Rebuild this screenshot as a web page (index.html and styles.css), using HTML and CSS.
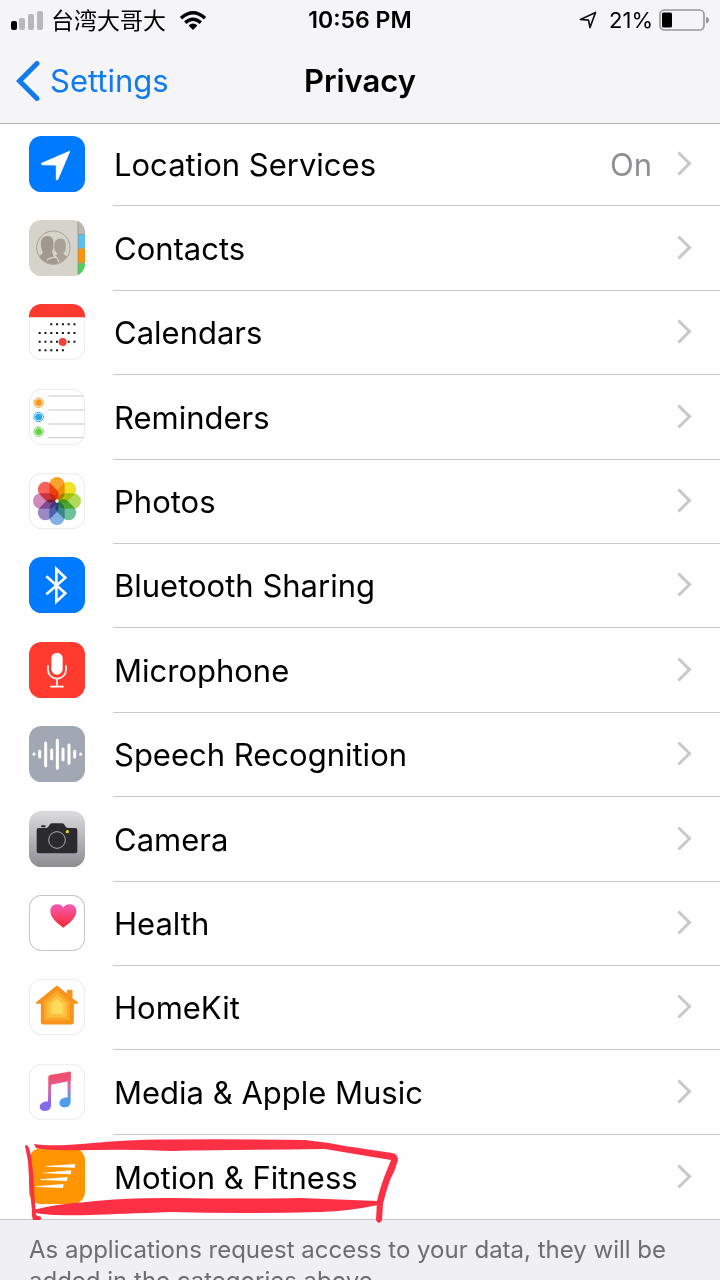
FILE: index.html
```html
<!DOCTYPE html>
<html lang="en">
<head>
<meta charset="utf-8">
<meta name="viewport" content="width=device-width, initial-scale=1">
<title>Privacy</title>
<link rel="stylesheet" href="styles.css">
</head>
<body>
<div class="screen">
  <header class="header">
    <div class="status">
      <div class="status-left">
        <svg class="signal" viewBox="0 0 32 20" aria-hidden="true"><rect x="0" y="11" width="6" height="9" rx="2"/><g fill="#b8b8bb"><rect x="8" y="8" width="6" height="12" rx="2"/><rect x="17" y="4" width="6" height="16" rx="2"/><rect x="26" y="1" width="6" height="19" rx="2"/></g></svg>
        <span class="carrier" lang="zh">台湾大哥大</span>
        <svg class="wifi" viewBox="0 0 26 19" aria-hidden="true"><g fill="none" stroke="#000" stroke-width="3.4"><path d="M1 7.200Q13-3.600 25 7.200"/><path d="M5.200 11.600Q13 4.800 20.800 11.600"/></g><path d="M8.600 14.600Q13 10.600 17.400 14.600L13 19Z"/></svg>
      </div>
      <time class="clock">10:56 PM</time>
      <div class="status-right">
        <svg class="gps" viewBox="0 0 18 18" aria-hidden="true"><path d="M1.500 8.500L16.500 1.500L11 16.500L9.500 9.200Z" fill="none" stroke="#111" stroke-width="1.700" stroke-linejoin="round"/></svg>
        <span class="percent">21%</span>
        <svg class="battery" viewBox="0 0 50 22" aria-hidden="true"><rect x="1" y="1" width="44" height="20" rx="4.500" fill="none" stroke="#96969a" stroke-width="1.600"/><rect x="3" y="3.500" width="10" height="15" rx="1.500"/><path d="M47 8Q50 8.500 50 11T47 14.500Z" fill="#96969a"/></svg>
      </div>
    </div>
    <nav class="navbar">
      <a class="back" href="#settings"><svg class="back-icon" viewBox="0 0 24 40" aria-hidden="true"><path d="M21 2.500L3.500 20L21 37.500" fill="none" stroke="#107bed" stroke-width="5" stroke-linecap="round"/></svg>Settings</a>
      <h1 class="title">Privacy</h1>
    </nav>
  </header>

  <main class="content">
    <ul class="list">
      <li class="row">
        <svg class="icon" viewBox="0 0 168 168" aria-hidden="true"><rect width="168" height="168" rx="37" fill="#007aff"/><path d="M38 82L122 46L86 131H82V87L38 86Z" fill="#fff" stroke="#fff" stroke-width="3" stroke-linejoin="round"/></svg>
        <a class="link" href="#location">Location Services<span class="value">On</span></a>
      </li>
      <li class="row">
        <svg class="icon" viewBox="0 0 168 168" aria-hidden="true">
          <clipPath id="tile"><rect width="168" height="168" rx="37"/></clipPath><clipPath id="disc"><circle cx="73" cy="83" r="49"/></clipPath>
          <g clip-path="url(#tile)"><path d="M0 0H168V168H0Z" fill="#d6d3ca"/><path d="M146 0H168V42H146Z" fill="#bcb8b2"/><path d="M147 43H168V84H147Z" fill="#5ac0ed"/><path d="M147 86H168V128H147Z" fill="#fb9208"/><path d="M147 130H168V168H147Z" fill="#4cd15f"/><path d="M147 0V168M147 43H168M147 85H168M147 129H168" stroke="#8c8a80" stroke-width="2"/></g>
          <g clip-path="url(#disc)"><path d="M92 56C110 54 111 70 110 82Q112 94 104 99Q103 104 112 108Q122 112 124 130H86L78 108Q86 104 83 98Q74 96 76 84C74 66 80 56 92 56Z" fill="#aaa299"/><path d="M56 48C71 48 75 62 73 78Q75 84 70 92Q68 101 76 106Q88 110 94 134H15Q18 110 38 104Q42 100 40 92Q34 82 36 74C34 58 42 48 56 48Z" fill="#a1998f"/><path d="M73 106Q87 110 91 134M73 104L80 94M53 121Q67 109 82 113" fill="none" stroke="#d6d3ca" stroke-width="4"/></g>
          <circle cx="73" cy="83" r="50" fill="none" stroke="#a8a199" stroke-width="3"/>
        </svg>
        <a class="link" href="#contacts">Contacts</a>
      </li>
      <li class="row">
        <svg class="icon" viewBox="0 0 168 168" aria-hidden="true"><rect x="1" y="1" width="166" height="166" rx="37" fill="#fff" stroke="#dedee0" stroke-width="2"/><path d="M0 40V37A37 37 0 0 1 37 0H131A37 37 0 0 1 168 37V40Z" fill="#fc3b30"/><g fill="none" stroke="#111" stroke-width="6" stroke-dasharray="6 11.400"><path d="M63.800 61H140"/><path d="M29 87H140"/><path d="M29 113H140"/><path d="M29 139H105"/></g><circle cx="101" cy="114" r="12" fill="#ef4138"/></svg>
        <a class="link" href="#calendars">Calendars</a>
      </li>
      <li class="row">
        <svg class="icon" viewBox="0 0 168 168" aria-hidden="true"><rect x="1" y="1" width="166" height="166" rx="37" fill="#fff" stroke="#dedee0" stroke-width="2"/><path d="M58 21H163M58 63H167M58 105H167M58 146H163" stroke="#c5c5c8" stroke-width="3"/><g stroke-width="3"><g fill="#f39a1e" stroke="#f39a1e"><circle cx="29" cy="41" r="14" fill="none"/><circle cx="29" cy="41" r="9"/></g><g fill="#2ca5e4" stroke="#2ca5e4"><circle cx="29" cy="84" r="14" fill="none"/><circle cx="29" cy="84" r="9"/></g><g fill="#67d144" stroke="#67d144"><circle cx="29" cy="128" r="14" fill="none"/><circle cx="29" cy="128" r="9"/></g></g></svg>
        <a class="link" href="#reminders">Reminders</a>
      </li>
      <li class="row">
        <svg class="icon" viewBox="0 0 168 168" aria-hidden="true"><rect x="1" y="1" width="166" height="166" rx="37" fill="#fff" stroke="#dedee0" stroke-width="2"/>
          <defs><rect id="petal" x="-23" y="-72" width="46" height="70" rx="23"/></defs>
          <g class="petals" transform="translate(84 84)"><use href="#petal" fill="#fba12d"/><use href="#petal" fill="#f2e32a" transform="rotate(45)"/><use href="#petal" fill="#b2d957" transform="rotate(90)"/><use href="#petal" fill="#6cc29a" transform="rotate(135)"/><use href="#petal" fill="#7fb1e2" transform="rotate(180)"/><use href="#petal" fill="#9b89c4" transform="rotate(225)"/><use href="#petal" fill="#d489bd" transform="rotate(270)"/><use href="#petal" fill="#f5635a" transform="rotate(315)"/></g><circle cx="84" cy="84" r="5" fill="#fff"/></svg>
        <a class="link" href="#photos">Photos</a>
      </li>
      <li class="row">
        <svg class="icon" viewBox="0 0 168 168" aria-hidden="true"><rect width="168" height="168" rx="37" fill="#007aff"/><path d="M52 58L109 109L82 134V36L109 62L52 112" fill="none" stroke="#fff" stroke-width="8"/></svg>
        <a class="link" href="#bluetooth">Bluetooth Sharing</a>
      </li>
      <li class="row">
        <svg class="icon" viewBox="0 0 168 168" aria-hidden="true"><rect width="168" height="168" rx="37" fill="#ff3b30"/><rect x="67" y="32" width="34" height="66" rx="17" fill="#fff"/><path d="M57 70V83A27 27 0 0 0 111 83V70M84 111V134M64 134H104" fill="none" stroke="#fff" stroke-width="5"/></svg>
        <a class="link" href="#microphone">Microphone</a>
      </li>
      <li class="row">
        <svg class="icon" viewBox="0 0 168 168" aria-hidden="true"><rect width="168" height="168" rx="37" fill="#a2a8b3"/><path d="M15 84V85M32 76V93M50 51V119M68 72V98M85 43V127M102 69V101M120 57V112M137 76V93M155 84V85" fill="none" stroke="#fff" stroke-width="9" stroke-linecap="round"/></svg>
        <a class="link" href="#speech">Speech Recognition</a>
      </li>
      <li class="row">
        <svg class="icon" viewBox="0 0 168 168" aria-hidden="true"><linearGradient id="metal" x2="0" y2="1"><stop stop-color="#dcdcdf"/><stop offset="1" stop-color="#8e8d93"/></linearGradient><rect width="168" height="168" rx="37" fill="url(#metal)"/><rect x="36" y="43" width="14" height="6" rx="3" fill="#2b2a2d"/><path d="M29 51H52Q57 50 60 44Q63 37 69 37H99Q105 37 108 44Q111 50 116 51H139Q145 51 145 57V121Q145 127 139 127H29Q23 127 23 121V57Q23 51 29 51Z" fill="#2b2a2d"/><circle cx="84" cy="87" r="25" fill="none" stroke="#aaa9ad" stroke-width="3"/><circle cx="115" cy="62" r="5" fill="#f5ce1d"/></svg>
        <a class="link" href="#camera">Camera</a>
      </li>
      <li class="row">
        <svg class="icon" viewBox="0 0 168 168" aria-hidden="true"><linearGradient id="heart" x2="0" y2="1"><stop stop-color="#f45bb4"/><stop offset="1" stop-color="#fb2730"/></linearGradient><rect x="1" y="1" width="166" height="166" rx="37" fill="#fff" stroke="#bcbcbf" stroke-width="3"/><path d="M103 98C90 88 64 71 64 49C64 35 73 28 84 28C94 28 100 33 103 38C106 33 112 28 122 28C133 28 142 35 142 49C142 71 116 88 103 98Z" fill="url(#heart)"/></svg>
        <a class="link" href="#health">Health</a>
      </li>
      <li class="row">
        <svg class="icon" viewBox="0 0 168 168" aria-hidden="true"><rect x="1" y="1" width="166" height="166" rx="37" fill="#fff" stroke="#dedee0" stroke-width="2"/><g stroke-linejoin="round" stroke-width="5"><path d="M84 22L116 49V35H128V59L145 72H132V130Q132 134 128 134H42Q38 134 38 130V72H23Z" fill="#f7931d" stroke="#f7931d"/><path d="M84 39L120 68V122H48V68Z" fill="#fba928" stroke="#fba928"/><path d="M84 50L111 73V112H57V73Z" fill="#fdbf3e" stroke="#fdbf3e"/><path d="M84 63L100 76V102H68V76Z" fill="#fedb5c" stroke="#fedb5c"/></g></svg>
        <a class="link" href="#homekit">HomeKit</a>
      </li>
      <li class="row">
        <svg class="icon" viewBox="0 0 168 168" aria-hidden="true"><linearGradient id="leftnote" gradientUnits="userSpaceOnUse" x1="0" y1="30" x2="0" y2="140"><stop offset=".1" stop-color="#f0506f"/><stop offset=".45" stop-color="#d665a8"/><stop offset=".8" stop-color="#8668ec"/></linearGradient><linearGradient id="rightnote" gradientUnits="userSpaceOnUse" x1="0" y1="23" x2="0" y2="130"><stop offset=".1" stop-color="#f0506f"/><stop offset=".4" stop-color="#cf71b6"/><stop offset=".8" stop-color="#4b9ee9"/></linearGradient><rect x="1" y="1" width="166" height="166" rx="37" fill="#fff" stroke="#dedee0" stroke-width="2"/><path d="M115 23L125 23V114Q124 130 107 130Q91 129 91 116Q92 102 116 100Z" fill="url(#rightnote)"/><path d="M58 39Q58 34 63 33L121 23Q125 23 125 27V50L66 62V124Q65 141 48 141Q32 140 32 128Q33 114 57 112Z" fill="url(#leftnote)"/></svg>
        <a class="link" href="#media">Media &amp; Apple Music</a>
      </li>
      <li class="row">
        <svg class="icon" viewBox="0 0 168 168" aria-hidden="true"><rect width="168" height="168" rx="37" fill="#ff9500"/><path d="M51 54L139 48L137 59L51 56ZM43 74L127 67L125 79L43 76ZM34 94L116 87L114 99L34 96ZM22 115L104 108L102 120L22 117Z" fill="#fff"/></svg>
        <a class="link" href="#motion">Motion &amp; Fitness</a>
        <svg class="marker" viewBox="20 1130 380 95" aria-hidden="true"><g fill="#fc3044"><path d="M34 1143Q50 1146 93 1142Q135 1138 170 1138.500Q240 1138 305 1139Q325 1141 345 1145L392 1152Q398 1153 398 1159Q395 1170 390 1179Q386 1190 383 1203L382 1219Q379 1225 376 1219L377 1200Q381 1183 387 1169L391 1159L325 1148Q240 1149 170 1150Q130 1148 93 1149Q50 1150 36 1147Z"/><path d="M33 1209Q55 1203 87 1201Q120 1197 170 1197Q250 1198 300 1197L378 1200V1204Q350 1210 320 1211Q240 1213 170 1211Q120 1213 90 1214Q50 1215 36 1212Z"/><path d="M25 1145Q27 1142 29 1147Q33 1160 34 1190Q35 1202 36 1214L41 1216Q42 1218 40 1219H33Q31 1214 32 1210Q29 1185 28 1160Z"/></g></svg>
      </li>
    </ul>
    <p class="note">As applications request access to your data, they will be added in the categories above.</p>
  </main>
</div>
</body>
</html>
```
FILE: styles.css
```css
*,
*::after { box-sizing: border-box; }

body {
  margin: 0;
  background: #efeff4;
  color: #000;
  font-family: Inter, "Noto Sans CJK SC", sans-serif;
}

svg { display: block; flex: none; }

.screen {
  height: 100vh;
  overflow: hidden;
}

.header {
  background: #f5f5f7;
  border-bottom: 1px solid #b4b4b7;
}

.status {
  display: grid;
  grid-template-columns: 1fr auto 1fr;
  align-items: center;
  height: 40px;
  padding: 0 11px;
  font-size: 22px;
}

.status-left,
.status-right {
  display: flex;
  align-items: center;
}

.status-left { gap: 8px; }
.status-right { justify-content: flex-end; gap: 6px; }

.signal { width: 32px; height: 20px; }
.carrier { padding-bottom: 2px; font-family: "Noto Sans CJK SC", sans-serif; font-size: 23px; line-height: 38px; }
.wifi { width: 26px; height: 19px; margin-left: 6px; }
.clock { font-size: 23px; font-weight: 600; }
.gps { width: 18px; height: 18px; margin-right: 6px; }
.battery { width: 50px; height: 22px; }

.navbar {
  display: grid;
  grid-template-columns: 1fr auto 1fr;
  align-items: center;
  height: 83px;
  padding: 0 16px 2px;
}

.back {
  display: flex;
  align-items: center;
  gap: 10px;
  color: #107bed;
  font-size: 31px;
  text-decoration: none;
}

.back-icon { width: 24px; height: 40px; }

.title {
  margin: 0;
  font-size: 31px;
  font-weight: 600;
}

.list {
  margin: 0;
  padding: 0;
  background: #fefefe;
  border-bottom: 1px solid #c8c7cc;
  list-style: none;
}

.row {
  position: relative;
  display: flex;
  align-items: center;
  gap: 28px;
  height: 84px;
  padding-left: 29px;
}

.row:first-child { height: 82px; }
.row:nth-child(5n + 2),
.row:nth-child(5n + 4) { height: 85px; }

.icon { width: 56px; height: 56px; margin-bottom: 2px; }
.petals use { mix-blend-mode: multiply; }

.link {
  display: flex;
  flex: 1;
  align-items: center;
  align-self: stretch;
  padding: 0 32px 0 1px;
  border-bottom: 1px solid #c8c7cc;
  color: #000;
  font-size: 31px;
  text-decoration: none;
}

.row:last-child .link { border-bottom: 0; }

.link::after {
  width: 17px;
  height: 17px;
  margin-bottom: 2px;
  margin-left: auto;
  border: solid #c7c7cc;
  border-width: 3px 3px 0 0;
  content: "";
  transform: rotate(45deg);
}

.value {
  flex: 1;
  padding-right: 19px;
  color: #8e8e93;
  text-align: right;
}

.marker {
  position: absolute;
  top: -4px;
  left: 20px;
  width: 380px;
  height: 95px;
}

.note {
  margin: 0;
  padding: 14px 29px;
  color: #6d6d72;
  font-size: 24px;
  line-height: 31px;
}
```
